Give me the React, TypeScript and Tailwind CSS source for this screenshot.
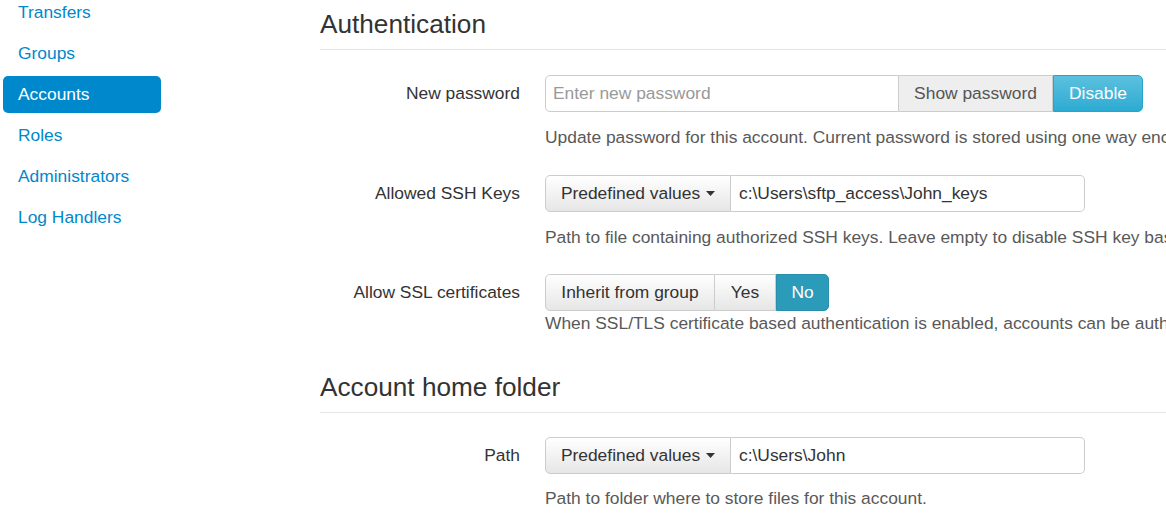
import React from "react"

const navItems = ["Transfers", "Groups", "Accounts", "Roles", "Administrators", "Log Handlers"]

function Caret() {
  return (
    <svg width="9" height="5" viewBox="0 0 9 5" className="ml-[6px] inline-block">
      <path d="M0 0 L9 0 L4.5 5 Z" fill="#333" />
    </svg>
  )
}

function SectionTitle({ children }: { children: React.ReactNode }) {
  return (
    <h2 className="text-[26.2px] leading-[29px] text-[#333] pb-[10px] border-b border-[#e5e5e5]">
      {children}
    </h2>
  )
}

function Row({ label, children }: { label: string; children: React.ReactNode }) {
  return (
    <div className="flex items-center">
      <div className="w-[200px] shrink-0 text-right text-[#333]">{label}</div>
      <div className="ml-[25px] flex">{children}</div>
    </div>
  )
}

function Help({ children, className = "" }: { children: React.ReactNode; className?: string }) {
  return <div className={"ml-[225px] leading-[25px] text-[#595959] " + className}>{children}</div>
}

const btnDefault =
  "h-[37px] flex items-center justify-center border border-[#ccc] bg-gradient-to-b from-white to-[#e6e6e6] text-[#333]"

export default function App() {
  return (
    <div className="flex w-[1166px] h-[521px] overflow-hidden bg-white font-['Liberation_Sans',Arial,sans-serif] text-[17.4px]">
      {/* Sidebar */}
      <aside className="w-[320px] shrink-0 pl-[3px]">
        <nav className="mt-[-6px] flex flex-col gap-[4px] w-[158px]">
          {navItems.map((item) => (
            <div
              key={item}
              className={
                item === "Accounts"
                  ? "h-[37px] flex items-center px-[15px] rounded-[5px] bg-[#0088cc] text-white"
                  : "h-[37px] flex items-center px-[15px] text-[#0088cc]"
              }
            >
              {item}
            </div>
          ))}
        </nav>
      </aside>

      {/* Main */}
      <main className="flex-1 min-w-0 whitespace-nowrap pt-[10px]">
        <SectionTitle>Authentication</SectionTitle>

        <div className="mt-[25px]">
          <Row label="New password">
            <div className="w-[354px] h-[37px] flex items-center pl-[7px] border border-[#ccc] rounded-l-[5px] text-[#999]">
              Enter new password
            </div>
            <div className="w-[154px] h-[37px] flex items-center justify-center border border-l-0 border-[#ccc] bg-[#eeeeee] text-[#555]">
              Show password
            </div>
            <div className="w-[90px] h-[37px] flex items-center justify-center border border-[#28a4c9] rounded-r-[5px] bg-gradient-to-b from-[#5bc0de] to-[#2aabd2] text-white">
              Disable
            </div>
          </Row>
          <Help className="mt-[13px]">
            Update password for this account. Current password is stored using one way encryption and can not be displayed.
          </Help>
        </div>

        <div className="mt-[25px]">
          <Row label="Allowed SSH Keys">
            <div className={btnDefault + " w-[186px] rounded-l-[5px]"}>
              Predefined values
              <Caret />
            </div>
            <div className="w-[354px] h-[37px] flex items-center pl-[8px] border border-l-0 border-[#ccc] rounded-r-[5px] text-[#333]">
              c:\Users\sftp_access\John_keys
            </div>
          </Row>
          <Help className="mt-[13px]">
            Path to file containing authorized SSH keys. Leave empty to disable SSH key based authentication.
          </Help>
        </div>

        <div className="mt-[24px]">
          <Row label="Allow SSL certificates">
            <div className={btnDefault + " w-[170px] rounded-l-[5px]"}>Inherit from group</div>
            <div className={btnDefault + " w-[61px] border-l-0"}>Yes</div>
            <div className="w-[53px] h-[37px] flex items-center justify-center border border-[#2a8fac] rounded-r-[5px] bg-[#2c9ab9] text-white">
              No
            </div>
          </Row>
          <Help>
            When SSL/TLS certificate based authentication is enabled, accounts can be authenticated using client certificates.
          </Help>
        </div>

        <div className="mt-[37px]">
          <SectionTitle>Account home folder</SectionTitle>
        </div>

        <div className="mt-[24px]">
          <Row label="Path">
            <div className={btnDefault + " w-[186px] rounded-l-[5px]"}>
              Predefined values
              <Caret />
            </div>
            <div className="w-[354px] h-[37px] flex items-center pl-[8px] border border-l-0 border-[#ccc] rounded-r-[5px] text-[#333]">
              c:\Users\John
            </div>
          </Row>
          <Help className="mt-[12px]">Path to folder where to store files for this account.</Help>
        </div>
      </main>
    </div>
  )
}
